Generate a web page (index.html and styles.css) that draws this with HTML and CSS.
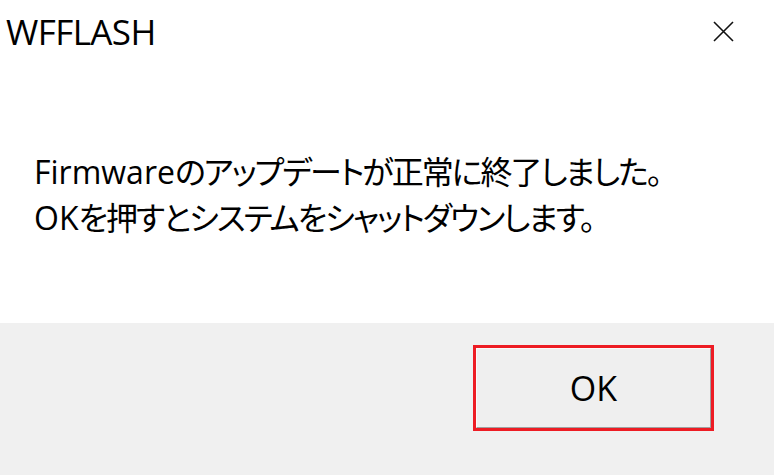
FILE: index.html
```html
<!DOCTYPE html>
<html lang="ja">
<head>
    <meta charset="UTF-8">
    <meta name="viewport" content="width=device-width, initial-scale=1.0">
    <title>WFFLASH</title>
    <link rel="stylesheet" href="styles.css">
</head>
<body>
    <div class="dialog">
        <!-- タイトルバー -->
        <div class="title-bar">
            <span class="title">WFFLASH</span>
            <button class="close" aria-label="閉じる">
                <svg width="21" height="21" viewBox="0 0 21 21">
                    <path d="M1 1 L20 20 M20 1 L1 20" stroke="#111" stroke-width="1.6" fill="none"/>
                </svg>
            </button>
        </div>

        <!-- メッセージ -->
        <div class="message">
            <p><span class="latin">Firmware</span>のアップデートが正常に終了しました。</p>
            <p><span class="latin">OK</span>を押すとシステムをシャットダウンします。</p>
        </div>

        <!-- ボタン -->
        <div class="footer">
            <div class="highlight">
                <button class="btn-ok">OK</button>
            </div>
        </div>
    </div>
</body>
</html>
```

FILE: styles.css
```css
/* General */
body {
    margin: 0;
    background: #fff;
    color: #000;
    font-family: 'Open Sans', 'Noto Sans CJK JP', sans-serif;
}

.dialog {
    width: 774px;
    height: 475px;
    display: flex;
    flex-direction: column;
}

/* Title bar */
.title-bar {
    height: 62px;
    display: flex;
    align-items: flex-start;
    justify-content: space-between;
}

.title {
    font-size: 35px;
    letter-spacing: -0.6px;
    line-height: 34px;
    margin: 15px 0 0 6px;
}

.close {
    background: none;
    border: none;
    padding: 0;
    margin: 21px 40px 0 0;
    width: 21px;
    height: 21px;
}

.close svg {
    display: block;
}

/* Message */
.message {
    flex: 1;
    padding: 87px 0 0 34px;
    font-size: 32px;
    font-feature-settings: "palt";
}

.message p {
    margin: 0;
    line-height: 46px;
    letter-spacing: -2px;
}

.message .latin {
    letter-spacing: 0;
}

/* Footer */
.footer {
    height: 152px;
    background: #f0f0f0;
    display: flex;
    justify-content: flex-end;
    align-items: flex-start;
    padding: 22px 60px 0 0;
    box-sizing: border-box;
}

.highlight {
    border: 3px solid #ed1c24;
}

.btn-ok {
    display: block;
    width: 235px;
    height: 80px;
    background: #efefef;
    border: 1px solid;
    border-color: #fafafa #a0a0a0 #a0a0a0 #fafafa;
    font-family: 'Open Sans', sans-serif;
    font-size: 34px;
    color: #000;
    padding: 0;
}
```
